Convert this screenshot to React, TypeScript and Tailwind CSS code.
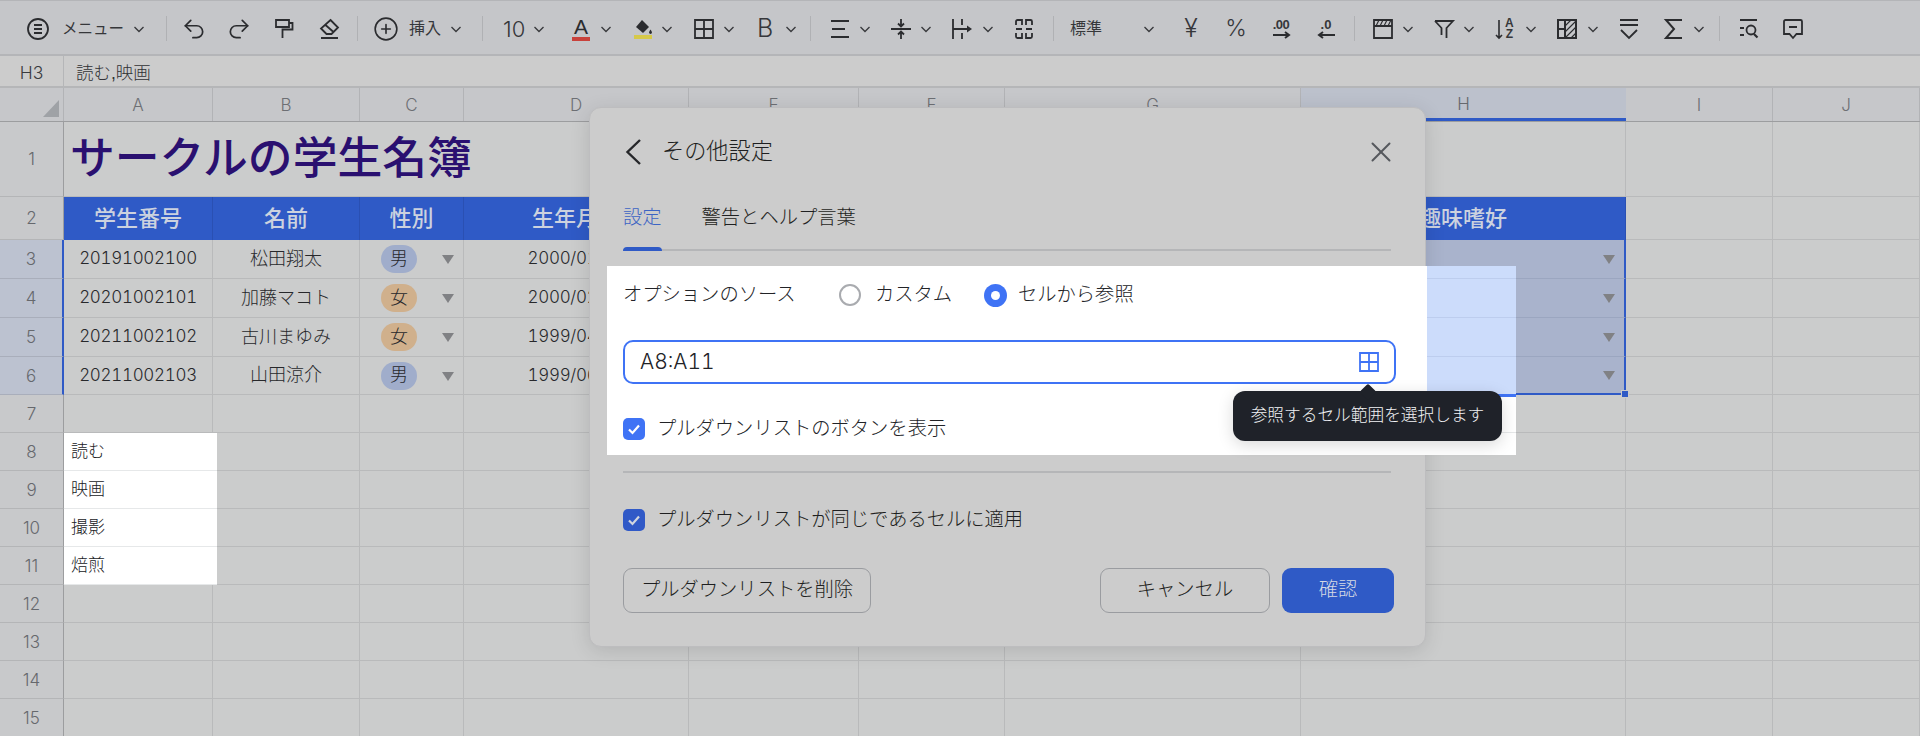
import React from 'react';
import { Undo2, Redo2, CirclePlus, X } from 'lucide-react';

const cols = 'grid grid-cols-[64px_149px_147px_104px_225px_170px_146px_296px_325px_147px_147px]';
const cell = 'border-r border-b border-[#b9babb]';

function Ico({ className = '', children }: { className?: string; children: React.ReactNode }) {
  return (
    <svg viewBox="0 0 24 24" fill="none" stroke="#2b2c2f" strokeWidth={1.8} className={`w-6 h-6 shrink-0 ${className}`}>
      {children}
    </svg>
  );
}

function Chev({ className = '' }: { className?: string }) {
  return (
    <svg viewBox="0 0 14 14" fill="none" stroke="#3a3b3e" strokeWidth={1.4} className={`w-3.5 h-3.5 shrink-0 ${className}`}>
      <path d="M2.5 5l4.5 4.5L11.5 5" />
    </svg>
  );
}

function Sep({ className = '' }: { className?: string }) {
  return <div className={`w-px h-[25px] bg-[#b0b1b4] shrink-0 ${className}`} />;
}

function Toolbar() {
  return (
    <div className="flex items-center h-14 pt-[2px] pl-[27px] bg-[#c5c6c9] border-t border-b-2 border-t-[#b4b5b8] border-b-[#b4b5b8] text-[#36373a]">
      <svg viewBox="0 0 22 22" fill="none" stroke="#2b2c2f" strokeWidth={1.8} className="w-[22px] h-[22px] shrink-0">
        <circle cx="11" cy="11" r="10" />
        <path d="M7 7h8M7 11h8M7 15h8" />
      </svg>
      <span className="ml-[13px] w-[63px] text-[15.5px] whitespace-nowrap">メニュー</span>
      <Chev className="ml-[7px]" />
      <Sep className="ml-5" />
      <Undo2 size={26} strokeWidth={1.6} color="#2b2c2f" className="ml-[14px] shrink-0" />
      <Redo2 size={26} strokeWidth={1.6} color="#2b2c2f" className="ml-[19px] shrink-0" />
      <Ico className="ml-5">
        <path d="M4 3h13v7H4zM17 6h3.5v6.5H10.5V21" />
      </Ico>
      <Ico className="ml-[21px]">
        <path d="M13.5 3 21 10.5 14.5 17h-5L4 11.5zM8.5 8l8 7M4 21h17" />
      </Ico>
      <Sep className="ml-4" />
      <CirclePlus size={26} strokeWidth={1.5} color="#2b2c2f" className="ml-[15px] shrink-0" />
      <span className="ml-[10px] w-[33px] text-[16px] whitespace-nowrap">挿入</span>
      <Chev className="ml-[7px]" />
      <Sep className="ml-[19px]" />
      <span className="ml-5 w-[25px] text-[22px] font-['Inter',sans-serif] font-light leading-none">10</span>
      <Chev className="ml-1" />
      <div className="ml-[23px] w-6 flex flex-col items-center">
        <span className="text-[21px] leading-[20px] text-[#2b2c2f]">A</span>
        <div className="w-[18px] h-1 bg-[#c8413b]" />
      </div>
      <Chev className="ml-1.5" />
      <div className="ml-[18px] w-6 flex flex-col items-center">
        <svg viewBox="0 0 20 16" className="w-5 h-4">
          <path d="M9 1l7 7-6 6-7-6z" fill="#2b2c2f" />
          <path d="M17.5 10.5c1 1.6 1.4 2.3 1.4 3a1.4 1.4 0 0 1-2.8 0c0-.7.4-1.4 1.4-3z" fill="#2b2c2f" />
        </svg>
        <div className="w-[18px] h-1 bg-[#d6c94a]" />
      </div>
      <Chev className="ml-[5px]" />
      <Ico className="ml-[18px]">
        <path d="M3 3h18v18H3zM12 3v18M3 12h18" />
      </Ico>
      <Chev className="ml-1.5" />
      <span className="ml-[17px] w-6 text-center text-[25px] leading-none font-['Inter',sans-serif] font-light">B</span>
      <Chev className="ml-[7px]" />
      <Sep className="ml-3" />
      <Ico className="ml-[17px]">
        <path d="M3 4h18M4 12h13M3 20h18" strokeWidth={2} />
      </Ico>
      <Chev className="ml-1.5" />
      <Ico className="ml-[17px]">
        <path d="M2 12h20M12 2v7M9 6.5l3 3 3-3M12 22v-7M9 17.5l3-3 3 3" />
      </Ico>
      <Chev className="ml-1.5" />
      <Ico className="ml-[17px]">
        <path d="M3 2v20M12 2v6M12 16v6M3 12h14" />
        <path d="M17 8.5 22 12l-5 3.5z" fill="#2b2c2f" stroke="none" />
      </Ico>
      <Chev className="ml-[7px]" />
      <Ico className="ml-[17px]">
        <path d="M10 8V3H5.5A1.5 1.5 0 0 0 4 4.5V8M4 16v3.5A1.5 1.5 0 0 0 5.5 21H10v-5M14 8V3h4.5A1.5 1.5 0 0 1 20 4.5V8M20 16v3.5a1.5 1.5 0 0 1-1.5 1.5H14v-5M4 12h6M14 12h6" />
      </Ico>
      <Sep className="ml-[17px]" />
      <span className="ml-4 w-[34px] text-[16px] whitespace-nowrap">標準</span>
      <Chev className="ml-[38px]" />
      <span className="ml-[23px] w-6 text-center text-[25px] leading-none font-['Inter',sans-serif] font-light">¥</span>
      <span className="ml-[21px] w-6 text-center text-[23px] leading-none font-['Inter',sans-serif] font-light">%</span>
      <div className="ml-[21px] w-6 flex flex-col items-center">
        <span className="text-[13px] leading-[13px] font-bold tracking-[-0.5px]">.00</span>
        <svg viewBox="0 0 22 8" fill="none" stroke="#2b2c2f" strokeWidth={2} className="w-[22px] h-2">
          <path d="M3 4h16M15 1l4 3-4 3" />
        </svg>
      </div>
      <div className="ml-[21px] w-6 flex flex-col items-center">
        <span className="text-[13px] leading-[13px] font-bold">.0</span>
        <svg viewBox="0 0 22 8" fill="none" stroke="#2b2c2f" strokeWidth={2} className="w-[22px] h-2">
          <path d="M20 4H4M8 1 4 4l4 3" />
        </svg>
      </div>
      <Sep className="ml-4" />
      <Ico className="ml-4">
        <path d="M3 3h18v18H3zM3 9h18" />
        <path d="M5 9l3-6M9 9l3-6M13 9l3-6M17 9l3-6" strokeWidth={1.1} />
      </Ico>
      <Chev className="ml-1.5" />
      <Ico className="ml-[17px]">
        <path d="M3 4h18l-6.5 7v10M3 4l6.5 7v7" />
      </Ico>
      <Chev className="ml-1.5" />
      <div className="ml-[18px] w-6 h-6 flex items-center shrink-0">
        <svg viewBox="0 0 10 24" fill="none" stroke="#2b2c2f" strokeWidth={1.6} className="w-2.5 h-6 shrink-0">
          <path d="M5 3v18M2 18l3 3 3-3" />
        </svg>
        <div className="flex flex-col items-center text-[12px] leading-[11px] font-bold ml-px">
          <span>A</span>
          <span>Z</span>
        </div>
      </div>
      <Chev className="ml-1.5" />
      <Ico className="ml-[17px]">
        <path d="M3 3h18v18H3zM10 3v18M3 12h7" strokeWidth={2} />
        <path d="M10 9l6-6M10 15 21 4M10 21 21 10M16 21l5-5" strokeWidth={1.1} />
      </Ico>
      <Chev className="ml-[7px]" />
      <Ico className="ml-[17px]">
        <path d="M3 3h18M3 8h18M4 13l8 8 8-8" />
      </Ico>
      <Ico className="ml-[21px]">
        <path d="M20 3H4l8 9-8 9h16" strokeWidth={2} />
      </Ico>
      <Chev className="ml-1.5" />
      <Sep className="ml-[13px]" />
      <Ico className="ml-4">
        <path d="M4 3h17M4 11h4M4 18h4" strokeWidth={2} />
        <circle cx="15" cy="13" r="4.5" />
        <path d="M18 17l3.5 3.5" strokeWidth={2.2} />
      </Ico>
      <Ico className="ml-[21px]">
        <path d="M4.5 3h15A1.5 1.5 0 0 1 21 4.5V17h-5.5L12 21l-3.5-4H3V4.5A1.5 1.5 0 0 1 4.5 3zM8 10h8" />
      </Ico>
    </div>
  );
}

function FormulaBar() {
  return (
    <div className="flex h-8 bg-[#cccccc] border-b-2 border-[#b5b6b8] text-[#303134]">
      <div className="w-16 flex items-center justify-center pt-[4px] border-r border-[#b5b6b8] text-[17.5px] font-['Inter',sans-serif] font-light text-[#3a3b3f]">H3</div>
      <div className="flex items-center pl-3 pt-[4px] text-[17.5px] font-light">読む,映画</div>
    </div>
  );
}

function ColumnHeader() {
  const letters = ['A', 'B', 'C', 'D', 'E', 'F', 'G', 'H', 'I', 'J'];
  return (
    <div className={`${cols} h-[34px] bg-[#c6c7ca] border-b border-[#9c9d9f] font-['Inter',sans-serif]`}>
      <div className="flex items-end justify-end pr-[4px] pb-[4px] border-r border-[#b2b3b6]">
        <svg viewBox="0 0 16 17" className="w-4 h-[17px]">
          <path d="M16 0v17H0z" fill="#9fa2a6" />
        </svg>
      </div>
      {letters.map((l) =>
        l === 'H' ? (
          <div key={l} className="flex items-center justify-center pt-[3px] bg-[#bcc1cc] border-b-[3px] border-[#2f5ac6] text-[17px] font-light text-[#66686d]">
            {l}
          </div>
        ) : (
          <div key={l} className="flex items-center justify-center pt-[2px] border-r border-[#b2b3b6] text-[17px] font-light text-[#6d6f74]">
            {l}
          </div>
        ),
      )}
    </div>
  );
}

function RowNo({ n, selected }: { n: number; selected?: boolean }) {
  return selected ? (
    <div className="flex items-center justify-center pt-[2px] bg-[#bcc2d0] border-b border-r-2 border-b-[#a9aebb] border-r-[#2f5ac6] font-['Inter',sans-serif] text-[17px] font-light text-[#66686d]">{n}</div>
  ) : (
    <div className="flex items-center justify-center pt-[2px] bg-[#c8c9cb] border-b border-r border-b-[#b4b5b7] border-r-[#9c9d9f] font-['Inter',sans-serif] text-[17px] font-light text-[#66686d]">{n}</div>
  );
}

function Triangle() {
  return (
    <svg viewBox="0 0 12 10" className="w-3 h-2.5 shrink-0">
      <path d="M0 1h12L6 10z" fill="#808184" />
    </svg>
  );
}

const students = [
  { h: 'h-[39px]', n: 3, id: '20191002100', name: '松田翔太', sex: '男', date: '2000/01/15' },
  { h: 'h-[39px]', n: 4, id: '20201002101', name: '加藤マコト', sex: '女', date: '2000/02/21' },
  { h: 'h-[39px]', n: 5, id: '20211002102', name: '古川まゆみ', sex: '女', date: '1999/04/12' },
  { h: 'h-[38px]', n: 6, id: '20211002103', name: '山田涼介', sex: '男', date: '1999/06/08' },
];

const hobbies = ['読む', '映画', '撮影', '焙煎'];

function EmptyCells({ count }: { count: number }) {
  return (
    <>
      {Array.from({ length: count }).map((_, i) => (
        <div key={i} className={cell} />
      ))}
    </>
  );
}

function Sheet() {
  const headers = ['学生番号', '名前', '性別', '生年月日', '', '', '', '趣味嗜好'];
  return (
    <div className="bg-[#cbcccc] text-[#27282b]">
      <ColumnHeader />
      {/* タイトル */}
      <div className={`${cols} h-[75px]`}>
        <RowNo n={1} />
        <div className={`col-span-8 flex items-center pl-[6px] ${cell} text-[44.8px] font-medium text-[#2a1070] whitespace-nowrap`}>
          サークルの学生名簿
        </div>
        <EmptyCells count={2} />
      </div>
      {/* 見出し */}
      <div className={`${cols} h-[43px]`}>
        <RowNo n={2} />
        {headers.map((t, i) => (
          <div key={i} className="flex items-center justify-center bg-[#2f5ac6] border-r border-[#2a50b3] text-[22px] font-medium text-[#ccd2df] whitespace-nowrap">
            {t}
          </div>
        ))}
        <EmptyCells count={2} />
      </div>
      {/* 学生 */}
      {students.map((s) => (
        <div key={s.n} className={`${cols} ${s.h}`}>
          <RowNo n={s.n} selected />
          <div className={`flex items-center justify-center ${cell} font-['Inter',sans-serif] font-[350] tabular-nums tracking-[-0.3px] text-[17px]`}>{s.id}</div>
          <div className={`flex items-center justify-center ${cell} font-light text-[18px]`}>{s.name}</div>
          <div className={`flex items-center justify-between pl-[21px] pr-[9px] ${cell}`}>
            <span className={`w-[36px] h-[28px] rounded-[14px] flex items-center justify-center font-light text-[18px] ${s.sex === '男' ? 'bg-[#a0adcb]' : 'bg-[#d0b08c]'}`}>
              {s.sex}
            </span>
            <Triangle />
          </div>
          <div className={`flex items-center justify-center ${cell} font-['Inter',sans-serif] font-[350] tabular-nums tracking-[-0.3px] text-[17px]`}>{s.date}</div>
          <EmptyCells count={3} />
          {s.n === 6 ? (
            <div className="relative flex items-center justify-end pr-[9px] bg-[#a9b3cc] border-r-2 border-b-2 border-[#2f5ac6]">
              <Triangle />
              <div className="absolute right-[-5px] bottom-[-5px] w-2 h-2 bg-[#2f5ac6] border border-[#cbcccc]" />
            </div>
          ) : (
            <div className="flex items-center justify-end pr-[9px] bg-[#a9b3cc] border-r-2 border-b border-r-[#2f5ac6] border-b-[#9ba6c0]">
              <Triangle />
            </div>
          )}
          <EmptyCells count={2} />
        </div>
      ))}
      <div className={`${cols} h-[38px]`}>
        <RowNo n={7} />
        <EmptyCells count={10} />
      </div>
      {/* A8:A11 参照範囲 */}
      {hobbies.map((t, i) => (
        <div key={t} className={`${cols} h-[38px]`}>
          <RowNo n={8 + i} />
          <div className="relative z-[1] mr-[-4px] flex items-center pl-[7px] bg-white border-b border-[#e6e8e9] font-light text-[17px] text-[#202124]">{t}</div>
          <EmptyCells count={9} />
        </div>
      ))}
      {[12, 13, 14, 15].map((n) => (
        <div key={n} className={`${cols} h-[38px]`}>
          <RowNo n={n} />
          <EmptyCells count={10} />
        </div>
      ))}
    </div>
  );
}

function Check({ dim }: { dim?: boolean }) {
  return (
    <span className={`w-[22px] h-[22px] rounded-[5px] flex items-center justify-center shrink-0 ${dim ? 'bg-[#3059c7]' : 'bg-[#3f73f5]'}`}>
      <svg viewBox="0 0 14 14" fill="none" stroke={dim ? '#d0d5df' : '#ffffff'} strokeWidth={2.2} className="w-3.5 h-3.5">
        <path d="M2 7.5l3.5 3.5L12 3.5" />
      </svg>
    </span>
  );
}

function Dialog() {
  return (
    <div className="absolute left-[589px] top-[107px] w-[837px] h-[540px] pt-[22px] pl-[33px] pr-[34px] bg-[#cccccc] rounded-[12px] border border-[#bdbdbf] shadow-[0_4px_20px_rgba(0,0,0,0.12)] text-[19.3px] font-light text-[#1e1f21] z-10">
      <div className="flex items-center justify-between h-11">
        <div className="flex items-center">
          <svg viewBox="0 0 18 28" fill="none" stroke="#26272a" strokeWidth={2.4} className="w-[18px] h-7 ml-[1px]">
            <path d="M16 2 3.5 14 16 26" />
          </svg>
          <span className="ml-5 text-[22.2px]">その他設定</span>
        </div>
        <X size={34} strokeWidth={1.4} color="#55585d" className="mr-[-7px]" />
      </div>
      <div className="relative flex items-start h-[77px] pt-[30px] border-b-2 border-[#b5b6b8] leading-[28px]">
        <span className="text-[#3c64c4]">設定</span>
        <span className="ml-[40px]">警告とヘルプ言葉</span>
        <div className="absolute left-0 bottom-[-2px] w-[39px] h-1 rounded-t-[4px] bg-[#2f5ac6]" />
      </div>
      {/* ハイライト部分 */}
      <div className="relative ml-[-16px] mt-[15px] w-[909px] h-[189px] pl-[16px] pt-[17px] bg-white text-[#222327]">
        <div className="flex items-center h-6">
          <span className="w-[216px] whitespace-nowrap">オプションのソース</span>
          <span className="w-[22px] h-[22px] rounded-full border-2 border-[#a9abaf] shrink-0" />
          <span className="ml-[14px] w-[109px]">カスタム</span>
          <span className="w-[23px] h-[23px] rounded-full bg-[#3f73f5] flex items-center justify-center shrink-0">
            <span className="w-[9px] h-[9px] rounded-full bg-white" />
          </span>
          <span className="ml-[11px]">セルから参照</span>
        </div>
        <div className="mt-[33px] w-[773px] h-11 rounded-[10px] border-2 border-[#3f73f5] flex items-center justify-between pl-[15px] pr-[15px]">
          <span className="font-['Inter',sans-serif] font-[350] tabular-nums text-[21px]">A8:A11</span>
          <svg viewBox="0 0 20 20" fill="none" stroke="#3f73f5" strokeWidth={1.8} className="w-5 h-5">
            <path d="M1 1h18v18H1zM10 1v18M1 10h18" />
          </svg>
        </div>
        <div className="flex items-center mt-[31px]">
          <Check />
          <span className="ml-[12px]">プルダウンリストのボタンを表示</span>
        </div>
        {/* ダイアログの外側に見えるセル */}
        <div className="absolute right-0 top-0 bottom-0 w-[89px] flex flex-col">
          <div className="h-[13px] bg-[#ccdcfb] border-b border-[#bdcdee]" />
          <div className="h-[39px] bg-[#ccdcfb] border-b border-[#bdcdee]" />
          <div className="h-[39px] bg-[#ccdcfb] border-b border-[#bdcdee]" />
          <div className="h-[37px] bg-[#ccdcfb]" />
          <div className="h-[3px] bg-[#3f73f5]" />
          <div className="h-[36px] bg-white border-b border-[#e6e8e9]" />
          <div className="h-[22px] bg-white" />
        </div>
        {/* ツールチップ */}
        <div className="absolute left-[626px] top-[125px] w-[269px] h-[50px] rounded-[12px] bg-[#1f2229] flex items-center justify-center text-[16.7px] text-[#f2f3f5] shadow-[0_4px_16px_rgba(0,0,0,0.15)] whitespace-nowrap z-10">
          参照するセル範囲を選択します
          <div className="absolute top-[-5px] left-[129px] w-3 h-3 rotate-45 rounded-[2px] bg-[#1f2229]" />
        </div>
      </div>
      <div className="mt-[16px] h-0.5 bg-[#b5b6b8]" />
      <div className="flex items-center mt-[33px]">
        <Check dim />
        <span className="ml-[12px]">プルダウンリストが同じであるセルに適用</span>
      </div>
      <div className="flex justify-between mt-[33px] mr-[-3px]">
        <button className="w-[248px] h-[45px] rounded-[9px] border-[1.5px] border-[#9a9ca0]">プルダウンリストを削除</button>
        <div className="flex gap-3">
          <button className="w-[170px] h-[45px] rounded-[9px] border-[1.5px] border-[#9a9ca0]">キャンセル</button>
          <button className="w-[112px] h-[45px] rounded-[9px] bg-[#2f5ac6] text-[#d4d9e4]">確認</button>
        </div>
      </div>
    </div>
  );
}

export default function App() {
  return (
    <div className="relative w-[1920px] h-[736px] overflow-hidden bg-[#cbcccc] font-['Liberation_Sans','Noto_Sans_CJK_JP',sans-serif]">
      <Toolbar />
      <FormulaBar />
      <Sheet />
      <Dialog />
    </div>
  );
}
